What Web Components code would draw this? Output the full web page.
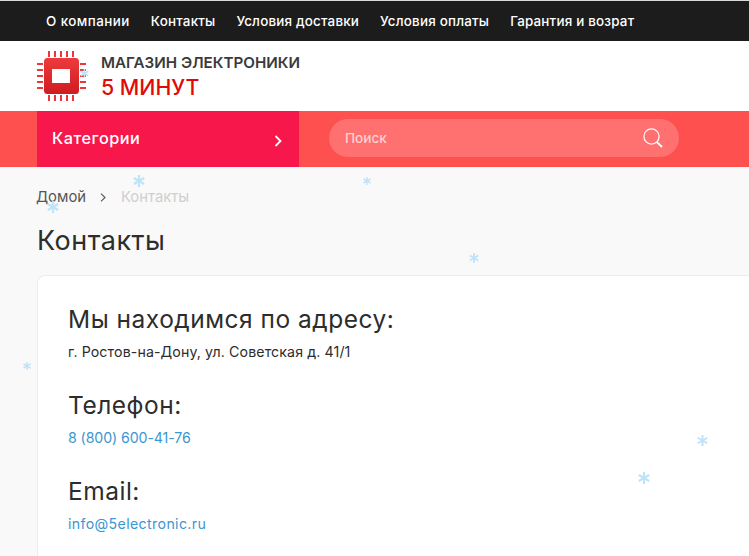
<!DOCTYPE html>
<html>
<head>
<meta charset="utf-8">
<style>
    html, body { margin: 0; padding: 0; }
    body {
        width: 749px;
        height: 556px;
        overflow: hidden;
        position: relative;
        background: #f9f9f9;
        font-family: Inter, "Open Sans", "Liberation Sans", sans-serif;
        color: #2d2d2d;
    }
</style>
</head>
<body>
<top-menu>
    <a style="letter-spacing:0.45px">О компании</a><a>Контакты</a><a>Условия доставки</a><a>Условия оплаты</a><a>Гарантия и возрат</a>
</top-menu>
<site-logo></site-logo>
<cat-bar></cat-bar>
<bread-crumbs></bread-crumbs>
<page-title>Контакты</page-title>
<contact-card>
    <contact-block head="Мы находимся по адресу:" style="--ls:0.1px">г. Ростов-на-Дону, ул. Советская д. 41/1</contact-block>
    <contact-block head="Телефон:" link style="--ls:-0.1px">8 (800) 600-41-76</contact-block>
    <contact-block head="Email:" link style="--ls:0.35px">info@5electronic.ru</contact-block>
</contact-card>

<snow-flake style="left:80px;top:69px" size="9"></snow-flake>
<snow-flake style="left:133px;top:175px" size="12"></snow-flake>
<snow-flake style="left:47px;top:201px" size="12"></snow-flake>
<snow-flake style="left:363px;top:177px" size="8"></snow-flake>
<snow-flake style="left:469px;top:253px" size="10"></snow-flake>
<snow-flake style="left:23px;top:362px" size="8"></snow-flake>
<snow-flake style="left:697px;top:435px" size="11"></snow-flake>
<snow-flake style="left:638px;top:472px" size="12"></snow-flake>

<script>
// верхнее меню
class TopMenu extends HTMLElement {
    constructor () {
        super();
        this.attachShadow({mode: 'open'}).innerHTML = `
        <style>
            :host { display: flex; height: 40px; margin-top: 1px; box-shadow: 0 -1px 0 #d8d8d8; background: #1c1c1c;
                    align-items: center; padding-left: 46px; gap: 21px; }
            ::slotted(a) { color: #fff; font-size: 13.4px; font-weight: 500; letter-spacing: 0.2px; white-space: nowrap; }
        </style>
        <slot></slot>`;
    }
}
customElements.define('top-menu', TopMenu);

class SiteLogo extends HTMLElement {
    constructor () {
        super();
        let pins = '';
        // ножки чипа
        for (let i = 0; i < 5; i++) {
            pins += `<rect x="${11 + i * 6}" y="0" width="2" height="6"/><rect x="${11 + i * 6}" y="44" width="2" height="6"/>`;
            pins += `<rect x="0" y="${12 + i * 6}" width="6" height="2"/><rect x="43" y="${12 + i * 6}" width="6" height="2"/>`;
        }
        this.attachShadow({mode: 'open'}).innerHTML = `
        <style>
            :host { display: flex; height: 70px; background: #fff; padding-left: 37px; align-items: center; gap: 15px; }
            svg { display: block; flex: none; }
            .t { display: flex; flex-direction: column; margin-top: 3px; }
            .a { font-size: 15.2px; font-weight: 600; line-height: 20px; color: #3a3a3a; white-space: nowrap; }
            .b { font-size: 21.3px; font-weight: 500; line-height: 29px; color: #e00a0a; white-space: nowrap; }
        </style>
        <svg width="49" height="50" viewBox="0 0 49 50">
            <defs><linearGradient id="g" x1="0" y1="0" x2="0" y2="1">
                <stop offset="0" stop-color="#ee3a3c"/><stop offset="1" stop-color="#cf1c20"/>
            </linearGradient></defs>
            <g fill="#e8383c">${pins}</g>
            <rect x="7" y="7" width="35" height="36" rx="3.5" fill="url(#g)"/>
            <rect x="15" y="18" width="18" height="14" fill="#fff"/>
        </svg>
        <div class="t"><span class="a">МАГАЗИН ЭЛЕКТРОНИКИ</span><span class="b">5 МИНУТ</span></div>`;
    }
}
customElements.define('site-logo', SiteLogo);

class CatBar extends HTMLElement {
    constructor () {
        super();
        this.attachShadow({mode: 'open'}).innerHTML = `
        <style>
            :host { display: flex; height: 56px; background: #ff5050; padding-left: 37px; gap: 30px; align-items: flex-start; }
            .cat { width: 262px; height: 56px; box-sizing: border-box; background: #f8174a; color: #fff; display: flex;
                   align-items: center; justify-content: space-between; padding: 0 17px 2px 15px; font-size: 16.3px; font-weight: 500; letter-spacing: 0.5px; }
            .cat svg { margin-top: 6px; }
            .search { width: 350px; height: 38px; margin-top: 8px; box-sizing: border-box; border-radius: 19px; background: #ff7070; display: flex;
                      align-items: center; justify-content: space-between; padding: 0 16px; font-size: 13.6px; font-weight: 500; color: #ffd0d0; }
        </style>
        <div class="cat"><span>Категории</span>
            <svg width="8" height="12" viewBox="0 0 8 12"><path d="M1.5 1 L6.5 6 L1.5 11" fill="none" stroke="#fff" stroke-width="1.8"/></svg>
        </div>
        <div class="search"><span>Поиск</span>
            <svg width="20" height="20" viewBox="0 0 20 20" fill="none" stroke="#fff"><circle cx="8.5" cy="8.5" r="7.6" stroke-width="1.2"/><path d="M13.8 14 L19 19" stroke-width="1.8"/></svg>
        </div>`;
    }
}
customElements.define('cat-bar', CatBar);

class BreadCrumbs extends HTMLElement {
    constructor () {
        super();
        this.attachShadow({mode: 'open'}).innerHTML = `
        <style>
            :host { display: flex; align-items: center; height: 20px; margin-top: 20px; padding-left: 36px; font-size: 14.8px; color: #555; }
            svg { margin: 1px 15px 0 14px; }
            .cur { color: #cfcfcf; }
        </style>
        <span>Домой</span>
        <svg width="6" height="9" viewBox="0 0 6 9"><path d="M1 .7 L5 4.5 L1 8.3" fill="none" stroke="#555" stroke-width="1.1"/></svg>
        <span class="cur">Контакты</span>`;
    }
}
customElements.define('bread-crumbs', BreadCrumbs);

class PageTitle extends HTMLElement {
    constructor () {
        super();
        this.attachShadow({mode: 'open'}).innerHTML = `
        <style>
            :host { display: block; margin-top: 16px; padding-left: 37px; font-size: 27px; letter-spacing: 0.5px; line-height: 36px; color: #2d2d2d; }
        </style>
        <slot></slot>`;
    }
}
customElements.define('page-title', PageTitle);

class ContactCard extends HTMLElement {
    constructor () {
        super();
        this.attachShadow({mode: 'open'}).innerHTML = `
        <style>
            :host { display: flex; flex-direction: column; gap: 25px; margin: 16px 0 0 37px; height: 281px;
                    box-sizing: border-box; background: #fff; border: 1px solid #ececec; border-width: 1px 0 0 1px;
                    border-radius: 8px 0 0 0; padding: 26px 30px 0; }
        </style>
        <slot></slot>`;
    }
}
customElements.define('contact-card', ContactCard);

class ContactBlock extends HTMLElement {
    constructor () {
        super();
        const head = this.getAttribute('head');
        const color = this.hasAttribute('link') ? '#3c96cf' : '#2d2d2d';
        this.attachShadow({mode: 'open'}).innerHTML = `
        <style>
            :host { display: block; }
            h3 { margin: 0 0 5px; font-size: 24.5px; font-weight: 400; letter-spacing: 0.5px; line-height: 34px; color: #2d2d2d; }
            p { margin: 0; font-size: 14.2px; letter-spacing: var(--ls, 0); line-height: 22px; color: ${color}; }
        </style>
        <h3>${head}</h3>
        <p><slot></slot></p>`;
    }
}
customElements.define('contact-block', ContactBlock);

// снежинки лежат поверх страницы
class SnowFlake extends HTMLElement {
    constructor () {
        super();
        const s = this.getAttribute('size') || 10;
        this.attachShadow({mode: 'open'}).innerHTML = `
        <style>
            :host { display: block; position: absolute; line-height: 0; }
        </style>
        <svg width="${s}" height="${s}" viewBox="0 0 12 12" stroke="#bfe3f8" stroke-width="2.2" fill="none">
            <path d="M6 0 V12 M.8 3 L11.2 9 M.8 9 L11.2 3"/>
        </svg>`;
    }
}
customElements.define('snow-flake', SnowFlake);
</script>
</body>
</html>
